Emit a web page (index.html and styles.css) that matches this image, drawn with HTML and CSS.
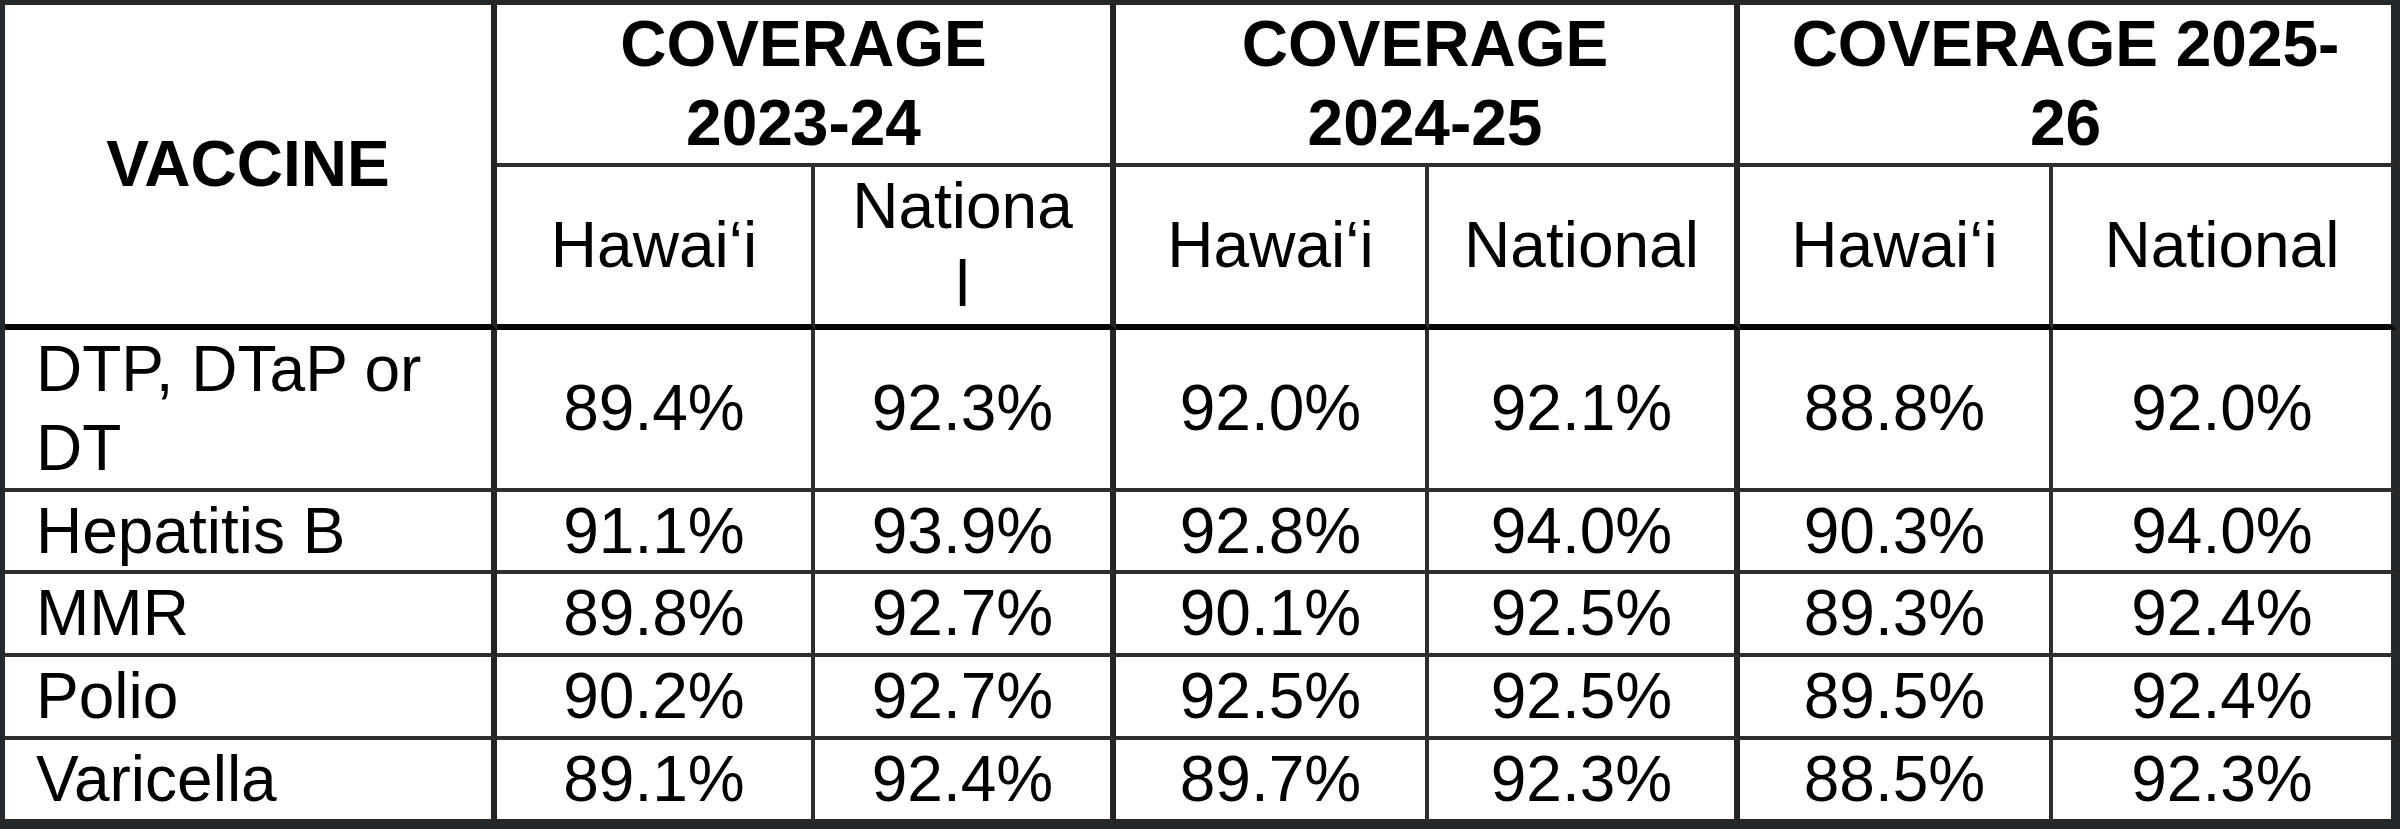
FILE: index.html
```html
<!DOCTYPE html>
<html lang="en">
<head>
<meta charset="utf-8">
<title>Vaccine coverage</title>
<link rel="stylesheet" href="styles.css">
</head>
<body>
<table class="coverage">
  <colgroup>
    <col class="c1"><col class="c2"><col class="c3"><col class="c4"><col class="c5"><col class="c6"><col class="c7">
  </colgroup>
  <thead>
    <tr>
      <th class="vaccine-head end-group" rowspan="2">VACCINE</th>
      <th class="group end-group" colspan="2">COVERAGE 2023-24</th>
      <th class="group end-group" colspan="2">COVERAGE 2024-25</th>
      <th class="group last" colspan="2">COVERAGE 2025-26</th>
    </tr>
    <tr class="sub-row">
      <th class="sub">Hawai‘i</th>
      <th class="sub end-group">National</th>
      <th class="sub">Hawai‘i</th>
      <th class="sub end-group">National</th>
      <th class="sub">Hawai‘i</th>
      <th class="sub last">National</th>
    </tr>
  </thead>
  <tbody>
    <tr>
      <td class="name end-group">DTP, DTaP or DT</td>
      <td class="val">89.4%</td><td class="val end-group">92.3%</td>
      <td class="val">92.0%</td><td class="val end-group">92.1%</td>
      <td class="val">88.8%</td><td class="val last">92.0%</td>
    </tr>
    <tr>
      <td class="name end-group">Hepatitis B</td>
      <td class="val">91.1%</td><td class="val end-group">93.9%</td>
      <td class="val">92.8%</td><td class="val end-group">94.0%</td>
      <td class="val">90.3%</td><td class="val last">94.0%</td>
    </tr>
    <tr>
      <td class="name end-group">MMR</td>
      <td class="val">89.8%</td><td class="val end-group">92.7%</td>
      <td class="val">90.1%</td><td class="val end-group">92.5%</td>
      <td class="val">89.3%</td><td class="val last">92.4%</td>
    </tr>
    <tr>
      <td class="name end-group">Polio</td>
      <td class="val">90.2%</td><td class="val end-group">92.7%</td>
      <td class="val">92.5%</td><td class="val end-group">92.5%</td>
      <td class="val">89.5%</td><td class="val last">92.4%</td>
    </tr>
    <tr class="final-row">
      <td class="name end-group">Varicella</td>
      <td class="val">89.1%</td><td class="val end-group">92.4%</td>
      <td class="val">89.7%</td><td class="val end-group">92.3%</td>
      <td class="val">88.5%</td><td class="val last">92.3%</td>
    </tr>
  </tbody>
</table>
</body>
</html>
```
FILE: styles.css
```css
html, body {
  margin: 0;
  padding: 0;
  background: #25282b;
}

.coverage {
  table-layout: fixed;
  width: 2396px;
  border-collapse: separate;
  border-spacing: 0;
  background: #ffffff;
  border-top: 5px solid #25282b;
  border-left: 5px solid #25282b;
  font-family: "Liberation Sans", Arial, sans-serif;
  font-size: 64px;
  line-height: 78.75px;
  color: #000000;
}

.c1 { width: 492px; }
.c2 { width: 318px; }
.c3 { width: 301px; }
.c4 { width: 313px; }
.c5 { width: 311px; }
.c6 { width: 313px; }
.c7 { width: 343px; }

.coverage th,
.coverage td {
  padding: 0 34px;
  vertical-align: middle;
  text-align: center;
  border-right: 4px solid #2e2e2e;
  border-bottom: 4px solid #2e2e2e;
  overflow-wrap: break-word;
  word-wrap: break-word;
}

.coverage th {
  font-weight: normal;
}

.coverage .vaccine-head,
.coverage .group {
  font-weight: bold;
}

.coverage .group {
  padding: 0 46px;
}

.coverage .end-group {
  border-right: 6px solid #222426;
}

.coverage .last {
  border-right: 5px solid #25282b;
}

.coverage .vaccine-head,
.coverage .sub {
  border-bottom: 6px solid #050505;
}

.coverage .name {
  text-align: left;
  padding: 0 30px 0 31px;
}

.coverage .final-row td {
  border-bottom: 5px solid #25282b;
}
```
